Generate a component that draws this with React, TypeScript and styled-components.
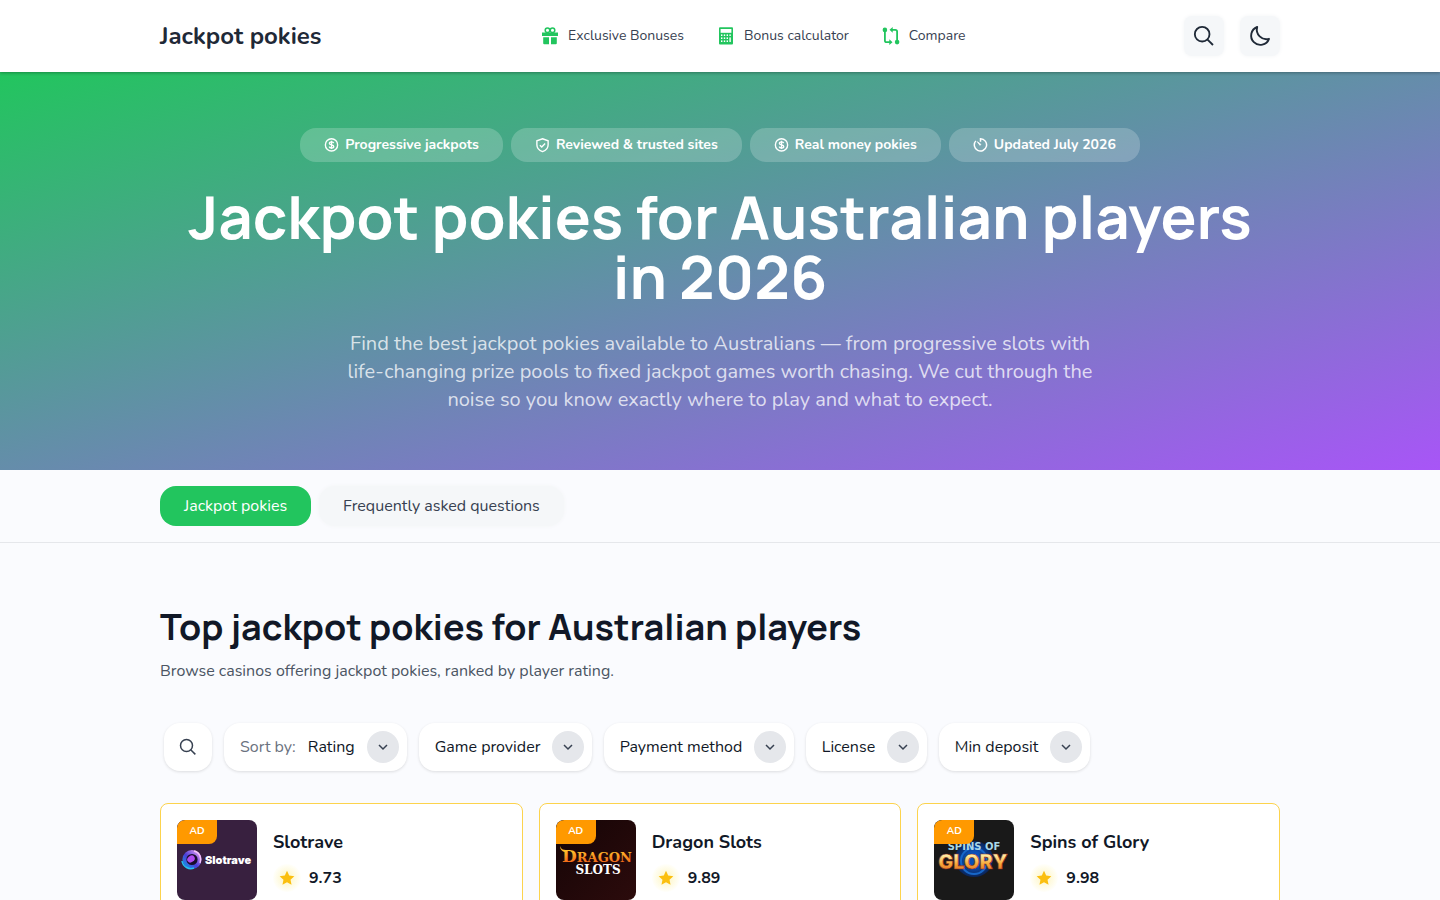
import React from "react";
import styled, { createGlobalStyle } from "styled-components";

const bodyFont = `Nunito, Lato, "Open Sans", sans-serif`;
const headingFont = `Manrope, Inter, "Open Sans", sans-serif`;

const GlobalStyle = createGlobalStyle`
  *, *::before, *::after { box-sizing: border-box; }
  body {
    margin: 0;
    background: #fafbfe;
    color: #111827;
    font-family: ${bodyFont};
    font-size: 16px;
    line-height: 24px;
    -webkit-font-smoothing: antialiased;
  }
  button, select { font: inherit; color: inherit; border: 0; margin: 0; cursor: pointer; }
  a { color: inherit; text-decoration: none; }
  h1, h2, h3, p, ul { margin: 0; padding: 0; }
  svg { display: block; flex: none; }
`;

const Container = styled.div`
  width: 100%;
  max-width: 1152px;
  margin: 0 auto;
  padding: 0 16px;
`;

const Header = styled.header`
  position: relative;
  background: #fff;
  box-shadow: 0 1px 3px rgba(0, 0, 0, 0.3);
`;

const HeaderRow = styled(Container)`
  display: flex;
  justify-content: space-between;
  align-items: center;
  height: 72px;
`;

const Brand = styled.a`
  font-size: 24px;
  line-height: 32px;
  font-weight: 700;
  color: #1f2937;
`;

const Nav = styled.nav`
  display: flex;
  gap: 32px;
`;

const NavLink = styled.a`
  display: flex;
  align-items: center;
  gap: 8px;
  font-size: 14px;
  line-height: 20px;
  color: #374151;
  svg { color: #22c55e; }
`;

const HeaderActions = styled.div`
  display: flex;
  justify-content: flex-end;
  gap: 16px;
`;

const IconButton = styled.button`
  display: grid;
  place-items: center;
  width: 40px;
  height: 40px;
  padding: 0;
  border-radius: 8px;
  background: #f5f7f9;
  color: #1f2937;
  box-shadow: 0 0 4px #f3f4f6;
`;

const Hero = styled.section`
  padding: 56px 0;
  background: linear-gradient(to bottom right, #22c55e, #a855f7);
  color: #fff;
  text-align: center;
`;

const HeroInner = styled(Container)`
  display: flex;
  flex-direction: column;
  align-items: center;
  gap: 24px;
`;

const Badges = styled.ul`
  display: flex;
  flex-wrap: wrap;
  justify-content: center;
  gap: 8px;
  list-style: none;
`;

const Badge = styled.li`
  display: flex;
  align-items: center;
  gap: 6px;
  height: 34px;
  padding: 0 24px;
  border-radius: 16px;
  background: rgba(255, 255, 255, 0.2);
  font-size: 14px;
  line-height: 20px;
  font-weight: 700;
`;

const HeroTitle = styled.h1`
  font-family: ${headingFont};
  font-size: 60px;
  line-height: 60px;
  font-weight: 700;
`;

const HeroText = styled.p`
  max-width: 768px;
  font-size: 20px;
  line-height: 28px;
  color: rgba(255, 255, 255, 0.76);
`;

const TabBar = styled.nav`
  padding: 16px 0;
  border-bottom: 1px solid #e5e7eb;
`;

const TabRow = styled(Container)`
  display: flex;
  gap: 8px;
`;

const Tab = styled.a<{ $active?: boolean }>`
  padding: 8px 24px;
  border-radius: 16px;
  background: ${(p) => (p.$active ? "#22c55e" : "#f5f7f9")};
  color: ${(p) => (p.$active ? "#fff" : "#374151")};
  box-shadow: ${(p) => (p.$active ? "none" : "0 0 4px #f3f4f6")};
`;

const Listing = styled.main`
  padding: 64px 0;
`;

const SectionTitle = styled.h2`
  font-family: ${headingFont};
  font-size: 36px;
  line-height: 40px;
  font-weight: 700;
`;

const SectionText = styled.p`
  margin-top: 12px;
  color: #4b5563;
`;

const Filters = styled.form`
  display: flex;
  flex-wrap: wrap;
  gap: 12px;
  margin: 40px 4px 32px;
`;

const pillShadow = "0 1px 3px rgba(0, 0, 0, 0.12)";

const SearchPill = styled.button`
  display: grid;
  place-items: center;
  width: 48px;
  height: 48px;
  padding: 0;
  border-radius: 16px;
  background: #fff;
  color: #374151;
  box-shadow: ${pillShadow};
`;

const FilterPill = styled.label`
  display: flex;
  align-items: center;
  height: 48px;
  padding: 0 8px 0 16px;
  border-radius: 16px;
  background: #fff;
  box-shadow: ${pillShadow};
`;

const FilterPrefix = styled.span`
  margin-right: 12px;
  color: #6b7280;
`;

const FilterSelect = styled.select`
  appearance: none;
  padding: 0;
  background: transparent;
  outline: none;
`;

const Chevron = styled.span`
  display: grid;
  place-items: center;
  width: 32px;
  height: 32px;
  margin-left: 11px;
  border-radius: 50%;
  background: #e5e7eb;
  color: #374151;
`;

const Cards = styled.div`
  display: grid;
  grid-template-columns: repeat(3, 1fr);
  gap: 16px;
`;

const Card = styled.article`
  display: flex;
  gap: 16px;
  padding: 16px;
  border: 1px solid #fcd34d;
  border-radius: 8px;
  background: #fff;
`;

const Logo = styled.div`
  position: relative;
  width: 80px;
  height: 80px;
  border-radius: 8px;
  overflow: hidden;
`;

const AdTag = styled.span`
  position: absolute;
  top: 0;
  left: 0;
  width: 40px;
  height: 24px;
  border-radius: 8px 0 8px 0;
  background: #ff9900;
  color: #fff;
  font-size: 10px;
  line-height: 22px;
  font-weight: 700;
  text-align: center;
`;

const CardInfo = styled.div`
  display: flex;
  flex-direction: column;
  padding-top: 8px;
  gap: 8px;
`;

const CardTitle = styled.h3`
  font-size: 18px;
  line-height: 28px;
  font-weight: 700;
`;

const Rating = styled.div`
  display: flex;
  align-items: center;
  gap: 8px;
  line-height: 28px;
  font-weight: 700;
`;

const StarDisc = styled.span`
  display: grid;
  place-items: center;
  width: 28px;
  height: 28px;
  border-radius: 50%;
  background: radial-gradient(circle, #fef9d8 30%, #fffef6 65%, #fff 75%);
  color: #fbbf0f;
`;

const GiftIcon = () => (
  <svg width="20" height="20" viewBox="0 0 20 20" fill="currentColor" aria-hidden="true">
    <path d="M2 6.5h16v3.600H2zM3.200 11.200H9v7H4.200a1 1 0 0 1-1-1zM11 11.200h5.800v6a1 1 0 0 1-1 1H11z" />
    <g fill="none" stroke="currentColor" strokeWidth="1.500">
      <circle cx="7.500" cy="4.200" r="2.300" />
      <circle cx="12.500" cy="4.200" r="2.300" />
    </g>
  </svg>
);

const CalculatorIcon = () => (
  <svg width="20" height="20" viewBox="0 0 20 20" aria-hidden="true">
    <rect x="3" y="1.2" width="14" height="17.3" rx="1" fill="currentColor" />
    <rect x="4.600" y="3" width="10.800" height="3.800" fill="#fff" />
    <g fill="#fff">
      {[8.4, 11.4, 14.4].map((y) =>
        [5, 7.8, 10.6].map((x) => <rect key={`${x}-${y}`} x={x} y={y} width="1.4" height="1.6" />)
      )}
      <rect x="13.400" y="8.400" width="1.400" height="1.600" />
      <rect x="13.400" y="11.400" width="1.400" height="4.600" />
    </g>
  </svg>
);

const CompareIcon = () => (
  <svg width="20" height="20" viewBox="0 0 20 20" fill="none" stroke="currentColor" strokeWidth="1.8" aria-hidden="true">
    <circle cx="3.900" cy="3.900" r="2.300" fill="currentColor" stroke="none" />
    <circle cx="16.100" cy="16.100" r="2.300" fill="currentColor" stroke="none" />
    <path d="M3.900 4v10.400a1.800 1.800 0 0 0 1.800 1.800h3.600M16.100 16V5.600a1.800 1.800 0 0 0-1.800-1.800h-3.600" />
    <path d="M8.300 13.300v5.800l3.200-2.900zM11.700.9v5.800l-3.200-2.900z" fill="currentColor" stroke="none" />
  </svg>
);

const SearchIcon = ({ size, stroke }: { size: number; stroke: number }) => (
  <svg width={size} height={size} viewBox="0 0 24 24" fill="none" stroke="currentColor" strokeWidth={stroke} aria-hidden="true">
    <circle cx="10" cy="10" r="8" />
    <path d="M15.600 15.600l6.200 6.200" />
  </svg>
);

const MoonIcon = () => (
  <svg width="24" height="24" viewBox="0 0 24 24" fill="none" stroke="currentColor" strokeWidth="1.900" strokeLinejoin="round" aria-hidden="true">
    <path d="M9.200 3A9.200 9.200 0 1 0 21 14.800 9.600 9.600 0 0 1 9.200 3z" />
  </svg>
);

const CoinIcon = () => (
  <svg width="15" height="15" viewBox="0 0 24 24" fill="none" stroke="currentColor" strokeWidth="2.200" aria-hidden="true">
    <circle cx="12" cy="11" r="9.800" />
    <path d="M15.500 8.200c-.3-1.300-1.600-2-3.500-2-2 0-3.400.9-3.400 2.400 0 3.400 7 1.400 7 4.900 0 1.600-1.500 2.500-3.600 2.500-2 0-3.400-.8-3.700-2.200M12 4.300v13.400" />
  </svg>
);

const ShieldIcon = () => (
  <svg width="15" height="15" viewBox="0 0 24 24" fill="none" stroke="currentColor" strokeWidth="2.200" aria-hidden="true">
    <path d="M12 1.200l9 3.200v6.200c0 5.400-3.700 9.200-9 11.200-5.300-2-9-5.800-9-11.200V4.400z" />
    <path d="M7.800 11.500l3 3 5.400-5.800" />
  </svg>
);

const ClockIcon = () => (
  <svg width="15" height="15" viewBox="0 0 24 24" fill="none" stroke="currentColor" strokeWidth="2.400" aria-hidden="true">
    <path d="M12 6V1.200a9.800 9.800 0 1 1-7.500 3.400" />
    <path d="M7 6l5.500 4.200-1.300 1.500z" fill="currentColor" strokeWidth="1.400" />
  </svg>
);

const ChevronIcon = () => (
  <svg width="10" height="10" viewBox="0 0 10 10" fill="none" stroke="currentColor" strokeWidth="1.500" aria-hidden="true">
    <path d="M1 3l4 4 4-4" />
  </svg>
);

const StarIcon = () => (
  <svg width="16" height="16" viewBox="0 0 24 24" fill="currentColor" aria-hidden="true">
    <path d="M12 1.200l3.300 7.100 7.700.9-5.700 5.300 1.500 7.700L12 18.400l-6.800 3.800 1.500-7.700L1 9.200l7.700-.9z" />
  </svg>
);

const SlotraveLogo = () => (
  <svg width="80" height="80" viewBox="0 0 80 80" role="img" aria-label="Slotrave">
    <defs>
      <linearGradient id="ring" x1="0" y1="1" x2="1" y2="0">
        <stop offset="0" stopColor="#1793e6" />
        <stop offset=".45" stopColor="#4b3fd8" />
        <stop offset="1" stopColor="#e79bf5" />
      </linearGradient>
    </defs>
    <rect width="80" height="80" fill="#38203f" />
    <circle cx="15" cy="39.500" r="7.600" fill="#170d2b" stroke="url(#ring)" strokeWidth="4" />
    <ellipse cx="14" cy="39" rx="4" ry="3.200" fill="#b14af0" transform="rotate(-35 14 39)" />
    <path d="M5 41c1 6 7 9 12 7" fill="none" stroke="#25c0ef" strokeWidth="1.500" />
    <path d="M17 31c5 1 8 6 6 12" fill="none" stroke="#f5c4fa" strokeWidth="1.300" />
    <text x="28" y="44" fill="#fff" fontFamily="Inter, sans-serif" fontWeight="900" fontSize="11">Slotrave</text>
  </svg>
);

const DragonLogo = () => (
  <svg width="80" height="80" viewBox="0 0 80 80" role="img" aria-label="Dragon Slots">
    <defs>
      <linearGradient id="fire" x1="0" y1="0" x2="0" y2="1">
        <stop offset="0.200" stopColor="#ffc62d" />
        <stop offset="1" stopColor="#ee4b12" />
      </linearGradient>
      <linearGradient id="ember" x1="0" y1="0" x2="1" y2="1">
        <stop offset="0" stopColor="#150506" />
        <stop offset="1" stopColor="#2c0b0c" />
      </linearGradient>
    </defs>
    <rect width="80" height="80" fill="url(#ember)" />
    <path d="M4 26c1 3 3 4 6 4v2c-3 0-6-2-6-6z" fill="#ffb52a" />
    <g fontFamily="'DejaVu Serif', serif" fontWeight="700" textAnchor="middle">
      <text x="41" y="42" fontSize="13" fill="url(#fire)">
        <tspan fontSize="17">D</tspan>RAGON
      </text>
      <text x="42" y="54" fontSize="12" fill="#fff">SLOTS</text>
    </g>
  </svg>
);

const GloryLogo = () => (
  <svg width="80" height="80" viewBox="0 0 80 80" role="img" aria-label="Spins of Glory">
    <defs>
      <linearGradient id="gold" x1="0" y1="0" x2="0" y2="1">
        <stop offset="0.200" stopColor="#fff0a8" />
        <stop offset=".6" stopColor="#f5a534" />
        <stop offset="1" stopColor="#d8542a" />
      </linearGradient>
      <radialGradient id="glow">
        <stop offset=".4" stopColor="#0b4fb8" />
        <stop offset="1" stopColor="#0a2458" />
      </radialGradient>
    </defs>
    <rect width="80" height="80" fill="#191919" />
    <ellipse cx="40" cy="39" rx="19" ry="18" fill="url(#glow)" />
    <ellipse cx="40" cy="41" rx="13" ry="13" fill="none" stroke="#1767c8" strokeWidth="2" />
    <g textAnchor="middle">
      <text x="40" y="30" fontSize="10" fontFamily="'DejaVu Sans', sans-serif" fontWeight="700" fill="#a9d8e8">SPINS OF</text>
      <text x="39" y="49" fontSize="20" fontFamily="Inter, sans-serif" fontWeight="900" fill="url(#gold)" stroke="#8b2b1c" strokeWidth=".6">GLORY</text>
    </g>
  </svg>
);

const badges = [
  { icon: <CoinIcon />, text: "Progressive jackpots" },
  { icon: <ShieldIcon />, text: "Reviewed & trusted sites" },
  { icon: <CoinIcon />, text: "Real money pokies" },
  { icon: <ClockIcon />, text: "Updated July 2026" },
];

const casinos = [
  { name: "Slotrave", rating: "9.73", logo: <SlotraveLogo /> },
  { name: "Dragon Slots", rating: "9.89", logo: <DragonLogo /> },
  { name: "Spins of Glory", rating: "9.98", logo: <GloryLogo /> },
];

const Filter = ({ prefix, value }: { prefix?: string; value: string }) => (
  <FilterPill>
    {prefix && <FilterPrefix>{prefix}</FilterPrefix>}
    <FilterSelect aria-label={prefix ? undefined : value}>
      <option>{value}</option>
    </FilterSelect>
    <Chevron>
      <ChevronIcon />
    </Chevron>
  </FilterPill>
);

export default function App() {
  return (
    <>
      <GlobalStyle />
      <Header>
        <HeaderRow>
          <Brand href="#">Jackpot pokies</Brand>
          <Nav aria-label="Main">
            <NavLink href="#bonuses"><GiftIcon />Exclusive Bonuses</NavLink>
            <NavLink href="#calculator"><CalculatorIcon />Bonus calculator</NavLink>
            <NavLink href="#compare"><CompareIcon />Compare</NavLink>
          </Nav>
          <HeaderActions>
            <IconButton type="button" aria-label="Search"><SearchIcon size={22} stroke={2} /></IconButton>
            <IconButton type="button" aria-label="Dark mode"><MoonIcon /></IconButton>
          </HeaderActions>
        </HeaderRow>
      </Header>

      <Hero>
        <HeroInner>
          <Badges>
            {badges.map((b) => (
              <Badge key={b.text}>{b.icon}{b.text}</Badge>
            ))}
          </Badges>
          <HeroTitle>Jackpot pokies for Australian players in 2026</HeroTitle>
          <HeroText>
            Find the best jackpot pokies available to Australians — from progressive slots with
            life-changing prize pools to fixed jackpot games worth chasing. We cut through the
            noise so you know exactly where to play and what to expect.
          </HeroText>
        </HeroInner>
      </Hero>

      <TabBar aria-label="Sections">
        <TabRow>
          <Tab href="#top" $active>Jackpot pokies</Tab>
          <Tab href="#faq">Frequently asked questions</Tab>
        </TabRow>
      </TabBar>

      <Listing id="top">
        <Container>
          <SectionTitle>Top jackpot pokies for Australian players</SectionTitle>
          <SectionText>Browse casinos offering jackpot pokies, ranked by player rating.</SectionText>
          <Filters>
            <SearchPill type="button" aria-label="Search casinos"><SearchIcon size={18} stroke={2} /></SearchPill>
            <Filter prefix="Sort by:" value="Rating" />
            <Filter value="Game provider" />
            <Filter value="Payment method" />
            <Filter value="License" />
            <Filter value="Min deposit" />
          </Filters>
          <Cards>
            {casinos.map((c) => (
              <Card key={c.name}>
                <Logo>
                  {c.logo}
                  <AdTag>AD</AdTag>
                </Logo>
                <CardInfo>
                  <CardTitle>{c.name}</CardTitle>
                  <Rating>
                    <StarDisc><StarIcon /></StarDisc>
                    {c.rating}
                  </Rating>
                </CardInfo>
              </Card>
            ))}
          </Cards>
        </Container>
      </Listing>
    </>
  );
}
